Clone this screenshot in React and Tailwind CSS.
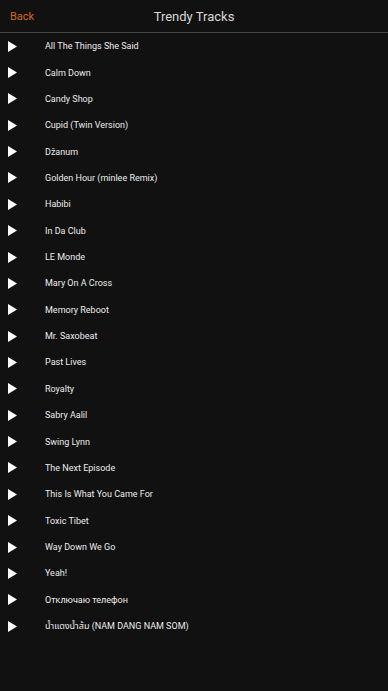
import React from "react";

const tracks = [
  "All The Things She Said",
  "Calm Down",
  "Candy Shop",
  "Cupid (Twin Version)",
  "Džanum",
  "Golden Hour (minlee Remix)",
  "Habibi",
  "In Da Club",
  "LE Monde",
  "Mary On A Cross",
  "Memory Reboot",
  "Mr. Saxobeat",
  "Past Lives",
  "Royalty",
  "Sabry Aalil",
  "Swing Lynn",
  "The Next Episode",
  "This Is What You Came For",
  "Toxic Tibet",
  "Way Down We Go",
  "Yeah!",
  "Отключаю телефон",
  "น้ำแดงน้ำส้ม (NAM DANG NAM SOM)",
];

function Play() {
  return (
    <svg width="9" height="11" viewBox="0 0 9 11" className="shrink-0">
      <path d="M0 0 L9 5.5 L0 11 Z" fill="#ffffff" />
    </svg>
  );
}

export default function App() {
  return (
    <div
      className="w-[388px] h-[691px] bg-[#111111] overflow-hidden"
      style={{ fontFamily: "Roboto, 'Noto Sans', 'Noto Sans Thai', sans-serif" }}
    >
      <div className="relative h-[33px] border-b border-[#474747] flex items-center justify-center pt-[2px]">
        <span className="absolute left-[10px] top-[10px] text-[11px] leading-[14px] text-[#d2691e]">Back</span>
        <span className="text-[13px] leading-[16px] text-[#d8d8d8]">Trendy Tracks</span>
      </div>
      <div className="flex flex-col">
        {tracks.map((t) => (
          <div key={t} className="h-[26.36px] flex items-center pl-[8px]">
            <Play />
            <span className="ml-[28px] text-[9px] leading-[12px] text-[#ececec]">{t}</span>
          </div>
        ))}
      </div>
    </div>
  );
}
